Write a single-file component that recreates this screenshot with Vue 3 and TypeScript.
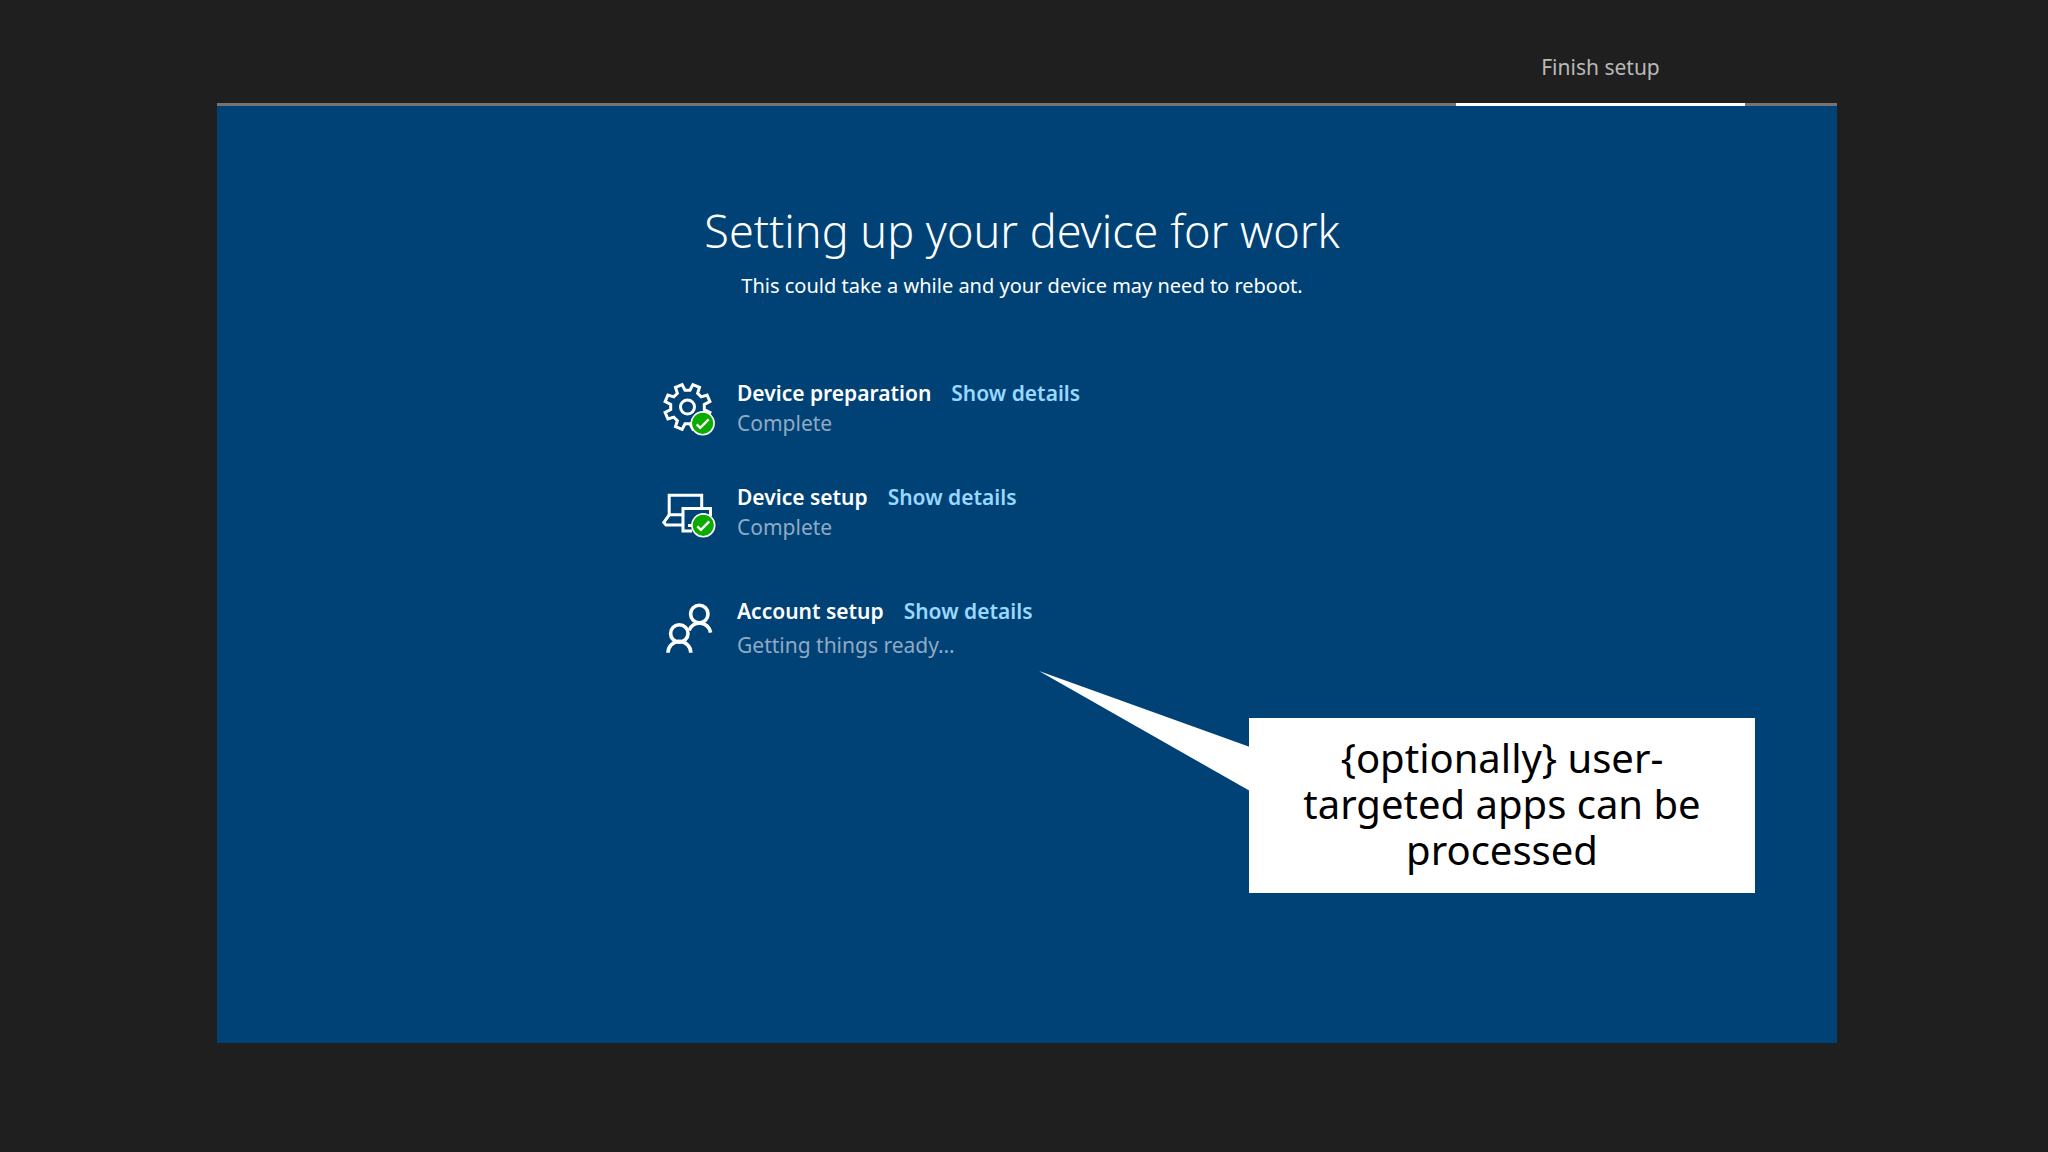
<script setup lang="ts">
interface Step {
  id: string
  icon: 'gear' | 'devices' | 'people'
  title: string
  status: string
  done: boolean
}

const steps: Step[] = [
  { id: 'preparation', icon: 'gear', title: 'Device preparation', status: 'Complete', done: true },
  { id: 'device', icon: 'devices', title: 'Device setup', status: 'Complete', done: true },
  { id: 'account', icon: 'people', title: 'Account setup', status: 'Getting things ready…', done: false },
]

// Outline of an eight-toothed gear centred on (cx, cy)
function gearPath(cx: number, cy: number, outer: number, inner: number): string {
  const points: string[] = []
  const add = (radius: number, degrees: number) => {
    const a = (degrees * Math.PI) / 180
    points.push(`${(cx + radius * Math.sin(a)).toFixed(1)} ${(cy - radius * Math.cos(a)).toFixed(1)}`)
  }
  for (let i = 0; i < 8; i++) {
    const mid = 22.5 + i * 45
    add(inner, mid - 14)
    add(outer, mid - 9)
    add(outer, mid + 9)
    add(inner, mid + 14)
  }
  return `M${points.join('L')}Z`
}

const gear = gearPath(25.5, 27, 23, 17)
</script>

<template>
  <div class="page">
    <nav class="tabs" aria-label="Setup stages">
      <a class="tab" href="#finish" aria-current="step">Finish setup</a>
    </nav>

    <main class="panel">
      <header class="heading">
        <h1>Setting up your device for work</h1>
        <p>This could take a while and your device may need to reboot.</p>
      </header>

      <ul class="steps">
        <li v-for="step in steps" :key="step.id" class="step" :class="{ pending: !step.done }">
          <svg class="icon" viewBox="0 0 54 54" aria-hidden="true">
            <g v-if="step.icon === 'gear'">
              <path :d="gear" />
              <circle cx="25.5" cy="27" r="7" />
            </g>
            <g v-else-if="step.icon === 'devices'">
              <path d="M20 30.7H7.2V11.2H39.7V24" />
              <path d="M7.2 31L1.8 38.4L4 41H20" />
              <path d="M30 47H21V24.5H48.5V32" />
              <path d="M26 41.5H30" />
            </g>
            <g v-else class="people">
              <circle cx="37.3" cy="16" r="8.7" />
              <path d="M27 32.5A11.2 11.2 0 0 1 48.6 34.6" />
              <circle cx="17.3" cy="35.4" r="8.7" />
              <path d="M6 54.8A11.4 11.4 0 0 1 28.8 54.8" />
            </g>
            <g v-if="step.done" :transform="step.icon === 'gear' ? 'translate(40.7 43.3)' : 'translate(41.3 41.3)'">
              <circle class="badge" r="11.4" />
              <path class="check" d="M-6 1L-2.4 4.6L6 -4" />
            </g>
          </svg>
          <div class="text">
            <div class="line">
              <h2>{{ step.title }}</h2>
              <button type="button" :aria-label="`Show details: ${step.title}`">Show details</button>
            </div>
            <p class="status">{{ step.status }}</p>
          </div>
        </li>
      </ul>

      <aside class="callout">
        <svg class="tail" viewBox="0 0 211 121" aria-hidden="true">
          <path d="M0 0L211 76V120Z" />
        </svg>
        <p>{optionally} user-targeted apps can be processed</p>
      </aside>
    </main>
  </div>
</template>

<style>
body {
  margin: 0;
  background: #1f1f1f;
}
</style>

<style scoped>
.page {
  box-sizing: border-box;
  min-height: 100vh;
  padding: 30px 211px 109px 217px;
  display: flex;
  flex-direction: column;
  background: #1f1f1f;
  font-family: "Noto Sans", "Open Sans", sans-serif;
}

h1,
h2,
p,
ul {
  margin: 0;
  padding: 0;
}

.tabs {
  display: flex;
  justify-content: flex-end;
  padding-right: 92px;
  border-bottom: 3px solid #777372;
}

.tab {
  box-sizing: border-box;
  width: 289px;
  height: 76px;
  margin-bottom: -3px;
  padding-top: 22px;
  border-bottom: 3px solid #fff;
  color: #b9b9b9;
  font-size: 21px;
  line-height: 30px;
  text-align: center;
  text-decoration: none;
}

.panel {
  position: relative;
  flex: 1;
  background: #004276;
  color: #fff;
}

.heading {
  padding: 90px 10px 0 0;
  text-align: center;
}

h1 {
  font-size: 45px;
  line-height: 70px;
  font-weight: 300;
}

.heading p {
  font-size: 20px;
  line-height: 40px;
}

.steps {
  display: flex;
  flex-direction: column;
  gap: 44px;
  max-width: 730px;
  margin: 72px auto 0;
  list-style: none;
}

.step {
  display: flex;
  gap: 21px;
}

.step.pending {
  margin-top: 10px;
}

.icon {
  flex: none;
  width: 54px;
  height: 54px;
  margin-top: 2px;
  overflow: visible;
  fill: none;
  stroke: #fff;
  stroke-width: 3;
}

.people {
  stroke-width: 3.6;
}

.badge {
  fill: #0bab00;
  stroke-width: 1.6;
}

.check {
  stroke-width: 2.4;
}

.line {
  display: flex;
  gap: 20px;
}

h2,
button,
.status {
  font-size: 21px;
  line-height: 30px;
}

h2,
button {
  font-weight: 600;
}

button {
  padding: 0;
  border: 0;
  background: none;
  color: #99d8ff;
  font-family: inherit;
  cursor: pointer;
}

.status {
  color: #8faac4;
}

.pending .status {
  margin-top: 4px;
}

.callout {
  position: absolute;
  top: 612px;
  right: 82px;
  box-sizing: border-box;
  width: 506px;
  padding: 17px 50px 20px;
  background: #fff;
  color: #000;
  text-align: center;
}

.callout p {
  font-size: 40px;
  line-height: 46px;
}

.tail {
  position: absolute;
  top: -47px;
  right: 505px;
  width: 211px;
  height: 121px;
  fill: #fff;
}
</style>
